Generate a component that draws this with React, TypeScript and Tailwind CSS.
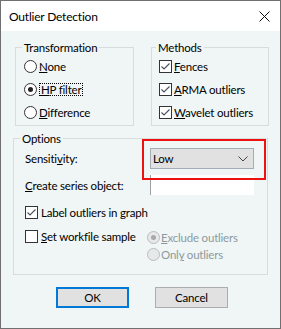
import React from "react";

function Check({ checked }: { checked: boolean }) {
  return (
    <span className="w-[13px] h-[13px] border border-[#333333] bg-white flex items-center justify-center shrink-0">
      {checked && (
        <svg width="11" height="11" viewBox="0 0 11 11">
          <path d="M1.5 5.5 L4 8 L9.5 2.5" stroke="#4a5560" strokeWidth="1.2" fill="none" />
        </svg>
      )}
    </span>
  );
}

function Radio({ selected, disabled }: { selected: boolean; disabled?: boolean }) {
  return (
    <span
      className={
        "w-[13px] h-[13px] rounded-full border flex items-center justify-center shrink-0 " +
        (disabled ? "border-[#bcbcbc] bg-[#e6e9e9]" : "border-[#333333] bg-white")
      }
    >
      {selected && (
        <span className={"w-[5px] h-[5px] rounded-full " + (disabled ? "bg-[#a8a8a8]" : "bg-[#222222]")} />
      )}
    </span>
  );
}

export default function App() {
  return (
    <div className="relative w-[281px] h-[329px] bg-[#f0f5f5] border border-[#707070] flex flex-col font-['Segoe_UI','Lato',sans-serif] text-[11.5px] tracking-[-0.2px] leading-[15px] text-black overflow-hidden">
      <div className="h-[30px] bg-white flex items-center justify-between pl-[8px] pr-[10px] pt-[1px] shrink-0">
        <span className="text-[12px]">Outlier Detection</span>
        <svg width="11" height="11" viewBox="0 0 11 11">
          <path d="M0.5 0.5 L10.5 10.5 M10.5 0.5 L0.5 10.5" stroke="#111" strokeWidth="1" fill="none" />
        </svg>
      </div>
      <div className="flex flex-col pl-[12px] pt-[9px]">
        <div className="flex ml-[2px]">
          <fieldset className="w-[119px] border border-[#d9dcdc] pb-[1px]">
            <legend className="ml-[6px] px-[2px] leading-[15px]">Transformation</legend>
            <div className="flex flex-col pl-[8px]">
              <div className="h-[23px] flex items-center gap-[2px]">
                <Radio selected={false} />
                <span><span className="underline">N</span>one</span>
              </div>
              <div className="h-[23px] flex items-center gap-[2px]">
                <Radio selected={true} />
                <span className="border border-dotted border-black px-[1px] leading-[11px] py-[0px]"><span className="underline">H</span>P filter</span>
              </div>
              <div className="h-[23px] flex items-center gap-[2px]">
                <Radio selected={false} />
                <span><span className="underline">D</span>ifference</span>
              </div>
            </div>
          </fieldset>
          <fieldset className="w-[118px] ml-[17px] border border-[#d9dcdc] pb-[1px]">
            <legend className="ml-[4px] px-[2px] leading-[15px]">Methods</legend>
            <div className="flex flex-col pl-[7px]">
              <div className="h-[23px] flex items-center gap-[2px]">
                <Check checked={true} />
                <span><span className="underline">F</span>ences</span>
              </div>
              <div className="h-[23px] flex items-center gap-[2px]">
                <Check checked={true} />
                <span><span className="underline">A</span>RMA outliers</span>
              </div>
              <div className="h-[23px] flex items-center gap-[2px]">
                <Check checked={true} />
                <span><span className="underline">W</span>avelet outliers</span>
              </div>
            </div>
          </fieldset>
        </div>
        <fieldset className="w-[255px] mt-[5px] border border-[#d9dcdc] pb-[11px]">
          <legend className="ml-[6px] px-[2px] leading-[15px]">Options</legend>
          <div className="flex flex-col pl-[11px]">
            <div className="mt-[2px] h-[21px] flex items-center">
              <span className="w-[125px]">Sensiti<span className="underline">v</span>ity:</span>
              <div className="w-[104px] h-[21px] bg-[#e1e1e1] border border-[#a3adb7] flex items-center justify-between pl-[2px] pr-[5px]">
                <span>Low</span>
                <svg width="10" height="6" viewBox="0 0 10 6">
                  <path d="M0.5 0.5 L5 5 L9.5 0.5" stroke="#444" strokeWidth="1" fill="none" />
                </svg>
              </div>
            </div>
            <div className="mt-[6px] h-[20px] flex items-center">
              <span className="w-[125px]"><span className="underline">C</span>reate series object:</span>
              <div className="w-[104px] h-[20px] bg-white border-l border-[#a0a0a0]" />
            </div>
            <div className="mt-[7px] h-[20px] flex items-center gap-[3px]">
              <Check checked={true} />
              <span>Label outliers in graph</span>
            </div>
            <div className="mt-[7px] flex">
              <div className="w-[122px] h-[15px] flex items-center gap-[3px]">
                <Check checked={false} />
                <span><span className="underline">S</span>et workfile sample</span>
              </div>
              <div className="flex flex-col text-[#8e9a9e]">
                <div className="h-[17px] flex items-center gap-[1px]">
                  <Radio selected={true} disabled />
                  <span><span className="underline">E</span>xclude outliers</span>
                </div>
                <div className="h-[17px] flex items-center gap-[1px]">
                  <Radio selected={false} disabled />
                  <span>Onl<span className="underline">y</span> outliers</span>
                </div>
              </div>
            </div>
          </div>
        </fieldset>
        <div className="mt-[12px] ml-[43px] flex gap-[26px]">
          <button className="w-[73px] h-[21px] bg-[#e1e1e1] border-2 border-[#0078d7] flex items-center justify-center">OK</button>
          <button className="w-[73px] h-[21px] bg-[#e1e1e1] border border-[#adadad] flex items-center justify-center">Cancel</button>
        </div>
      </div>
      <div className="absolute left-[141px] top-[138px] w-[124px] h-[41px] border-2 border-[#ee1111] pointer-events-none" />
    </div>
  );
}
